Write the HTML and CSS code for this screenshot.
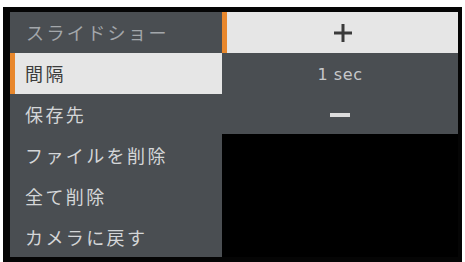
FILE: index.html
```html
<!DOCTYPE html>
<html lang="ja">
<head>
<meta charset="utf-8">
<link rel="stylesheet" href="styles.css">
</head>
<body>
<div class="screen">
  <div class="menu">
    <div class="item header">スライドショー</div>
    <div class="item selected">間隔</div>
    <div class="item">保存先</div>
    <div class="item">ファイルを削除</div>
    <div class="item">全て削除</div>
    <div class="item">カメラに戻す</div>
  </div>
  <div class="side">
    <div class="opt plus">
      <svg width="18" height="18" viewBox="0 0 18 18"><rect x="0" y="7.5" width="18" height="3" fill="#3a3a3a"/><rect x="7.5" y="0" width="3" height="18" fill="#3a3a3a"/></svg>
    </div>
    <div class="opt value">1 sec</div>
    <div class="opt minus"><span class="bar"></span></div>
  </div>
</div>
</body>
</html>
```
FILE: styles.css
```css
html, body {
  margin: 0;
  padding: 0;
  background: #ffffff;
}
.screen {
  margin: 7px 0 0 3px;
  width: 448px;
  height: 245px;
  background: #000;
  border-style: solid;
  border-color: #050505;
  border-width: 5px 4px 5px 7px;
  display: grid;
  grid-template-columns: 212px 236px;
}
.menu {
  background: #4a4e52;
  display: grid;
  grid-template-rows: repeat(6, 1fr);
}
.item {
  display: flex;
  align-items: center;
  padding-left: 15px;
  font-family: "Noto Sans CJK JP", sans-serif;
  font-size: 18px;
  letter-spacing: 2.4px;
  color: #d4d6d8;
}
.item.header {
  color: #a3a7ab;
  padding-left: 16px;
}
.item.selected {
  background: #e6e6e6;
  color: #3c3c3c;
  border-left: 5px solid #e8872c;
  padding-left: 10px;
}
.side {
  display: grid;
  grid-template-rows: 41px 43px 38px;
  align-content: start;
}
.opt {
  display: flex;
  align-items: center;
  justify-content: center;
  background: #4a4e52;
}
.opt.plus {
  background: #e6e6e6;
  border-left: 5px solid #e8872c;
}
.opt.value {
  font-family: "DejaVu Sans", sans-serif;
  font-size: 16px;
  letter-spacing: 0.6px;
  color: #c6c8ca;
}
.bar {
  display: block;
  width: 20px;
  height: 4px;
  background: #dcdcdc;
}
```
